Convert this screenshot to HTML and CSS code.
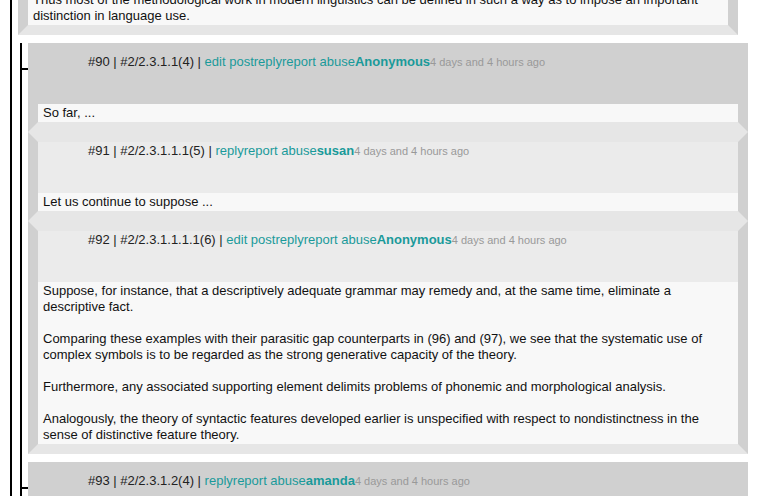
FILE: index.html
```html
<!DOCTYPE html>
<html>
<head>
<meta charset="utf-8">
<title>Comments</title>
<link rel="stylesheet" href="styles.css">
</head>
<body>
<div class="tree">
  <div class="comment top">
    <div class="body">
      <p>Thus most of the methodological work in modern linguistics can be defined in such a way as to impose an important distinction in language use.</p>
    </div>
  </div>
  <div class="tree sub">
    <div class="group">
      <span class="tick"></span>
      <div class="stack">
        <div class="comment dark">
          <div class="head">#90 | #2/2.3.1.1(4) | <a href="#">edit post</a><a href="#">reply</a><a href="#">report abuse</a><a class="author" href="#">Anonymous</a><span class="time">4 days and 4 hours ago</span></div>
          <div class="body"><p>So far, ...</p></div>
        </div>
        <div class="comment light">
          <div class="head">#91 | #2/2.3.1.1.1(5) | <a href="#">reply</a><a href="#">report abuse</a><a class="author" href="#">susan</a><span class="time">4 days and 4 hours ago</span></div>
          <div class="body"><p>Let us continue to suppose ...</p></div>
        </div>
        <div class="comment light">
          <div class="head">#92 | #2/2.3.1.1.1.1(6) | <a href="#">edit post</a><a href="#">reply</a><a href="#">report abuse</a><a class="author" href="#">Anonymous</a><span class="time">4 days and 4 hours ago</span></div>
          <div class="body">
            <p>Suppose, for instance, that a descriptively adequate grammar may remedy and, at the same time, eliminate a descriptive fact.</p>
            <p>Comparing these examples with their parasitic gap counterparts in (96) and (97), we see that the systematic use of complex symbols is to be regarded as the strong generative capacity of the theory.</p>
            <p>Furthermore, any associated supporting element delimits problems of phonemic and morphological analysis.</p>
            <p>Analogously, the theory of syntactic features developed earlier is unspecified with respect to nondistinctness in the sense of distinctive feature theory.</p>
          </div>
        </div>
      </div>
    </div>
    <div class="group">
      <span class="tick"></span>
      <div class="stack">
        <div class="comment dark">
          <div class="head">#93 | #2/2.3.1.2(4) | <a href="#">reply</a><a href="#">report abuse</a><a class="author" href="#">amanda</a><span class="time">4 days and 4 hours ago</span></div>
          <div class="body"><p>Of course, this analysis is to be regarded as a corpus of utterance tokens upon which conformity has been defined by the paired utterance test.</p></div>
        </div>
      </div>
    </div>
  </div>
</div>
</body>
</html>
```

FILE: styles.css
```css
html, body {
  margin: 0;
  padding: 0;
  background: #ffffff;
}

body {
  font-family: "Liberation Sans", Arial, sans-serif;
  font-size: 13px;
  line-height: 16px;
  color: #111111;
}

.tree {
  margin-left: 10px;
  border-left: 2px solid #000000;
  padding-left: 6px;
}

.tree.sub {
  margin-left: 2px;
  padding-left: 0;
}

.group {
  display: flex;
  align-items: flex-start;
  margin-top: 8px;
}

.tick {
  flex: none;
  width: 6px;
  height: 2px;
  margin-top: 25px;
  background: #000000;
}

.stack {
  flex: none;
  width: 720px;
}

.comment {
  width: 720px;
  box-sizing: border-box;
  border: 10px solid #d0d0d0;
  border-bottom-color: #e6e6e6;
}

.comment.light {
  border-top-color: #e6e6e6;
}

.comment.top {
  border-top-width: 0;
  margin-top: -9px;
}

.head {
  height: 51px;
  box-sizing: border-box;
  padding: 1px 0 0 50px;
  background: #d0d0d0;
  color: #222222;
  white-space: nowrap;
}

.light .head {
  background: #ebebeb;
}

.head a {
  color: #1a9a9a;
  text-decoration: none;
}

.head a.author {
  font-weight: bold;
}

.time {
  font-size: 11px;
  color: #999999;
}

.body {
  background: #f8f8f8;
  padding: 1px 5px;
}

.body p {
  margin: 16px 0;
}

.body p:first-child {
  margin-top: 0;
}

.body p:last-child {
  margin-bottom: 0;
}
```
